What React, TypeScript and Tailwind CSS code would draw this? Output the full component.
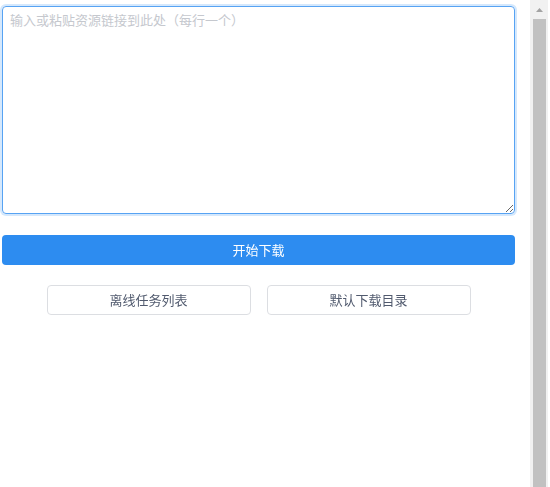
// Offline download panel — link input, start button, two secondary actions,
// plus a classic-style vertical scrollbar on the right edge.

const font = "font-['Microsoft_YaHei','Noto_Sans_CJK_SC',sans-serif]";

function Scrollbar() {
  return (
    <div className="w-[20px] h-full flex bg-white">
      <div className="w-[18px] h-full bg-[#f1f1f1] flex flex-col items-center">
        <div className="h-[19px] w-full flex items-center justify-center">
          <svg width="7" height="4" viewBox="0 0 7 4">
            <path d="M3.5 0 L7 4 L0 4 Z" fill="#a3a3a3" />
          </svg>
        </div>
        <div className="flex-1 w-[13px] ml-[1px] bg-[#c1c1c1]" />
      </div>
    </div>
  );
}

export default function App() {
  return (
    <div className={`w-[550px] h-[487px] flex bg-white ${font} [text-spacing-trim:space-all]`}>
      <div className="w-[530px] pl-[2px] pr-[15px] pt-[6px] flex flex-col">
        <textarea
          autoFocus
          placeholder="输入或粘贴资源链接到此处（每行一个）"
          className="w-[513px] h-[208px] rounded-[4px] border border-[#57a3f3] shadow-[0_0_0_2px_rgba(45,140,240,0.2)] outline-none px-[7px] py-[3px] text-[13px] leading-[20px] text-[#515a6e] placeholder:text-[#c5c8ce] resize-y [text-spacing-trim:space-all]"
        />
        <button
          type="button"
          className="mt-[21px] h-[30px] w-full rounded-[4px] bg-[#2d8cf0] text-white text-[13px]"
        >
          开始下载
        </button>
        <div className="mt-[20px] flex justify-center gap-[16px]">
          <button
            type="button"
            className="h-[30px] w-[204px] rounded-[4px] border border-[#dcdee2] bg-white text-[13px] text-[#515a6e]"
          >
            离线任务列表
          </button>
          <button
            type="button"
            className="h-[30px] w-[204px] rounded-[4px] border border-[#dcdee2] bg-white text-[13px] text-[#515a6e]"
          >
            默认下载目录
          </button>
        </div>
      </div>
      <Scrollbar />
    </div>
  );
}
